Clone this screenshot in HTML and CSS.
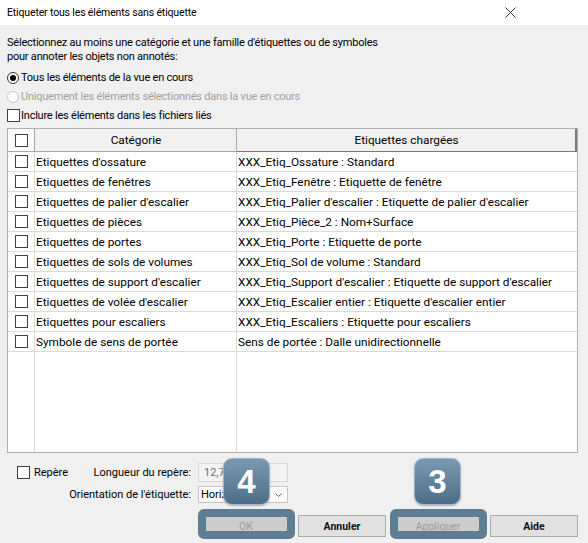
FILE: index.html
```html
<!DOCTYPE html>
<html lang="fr">
<head>
<meta charset="utf-8">
<title>Etiqueter tous les éléments sans étiquette</title>
<link rel="stylesheet" href="styles.css">
</head>
<body>
<div class="dialog">
  <div class="titlebar">
    <span class="title">Etiqueter tous les éléments sans étiquette</span>
    <svg class="close" viewBox="0 0 11 11"><path d="M0.5 0.5L10.5 10.5M10.5 0.5L0.5 10.5" stroke="#333" stroke-width="1" fill="none"/></svg>
  </div>
  <div class="content">
    <p class="intro">Sélectionnez au moins une catégorie et une famille d'étiquettes ou de symboles<br>pour annoter les objets non annotés:</p>
    <div class="opt first"><span class="radio checked"></span>Tous les éléments de la vue en cours</div>
    <div class="opt disabled"><span class="radio"></span>Uniquement les éléments sélectionnés dans la vue en cours</div>
    <div class="opt chk"><span class="check"></span>Inclure les éléments dans les fichiers liés</div>

    <div class="grid">
      <div class="row head">
        <div class="cb"><span class="check"></span></div>
        <div>Catégorie</div>
        <div class="sel">Etiquettes chargées</div>
      </div>
      <div class="row"><div class="cb"><span class="check"></span></div><div>Etiquettes d'ossature</div><div>XXX_Etiq_Ossature : Standard</div></div>
      <div class="row"><div class="cb"><span class="check"></span></div><div>Etiquettes de fenêtres</div><div>XXX_Etiq_Fenêtre : Etiquette de fenêtre</div></div>
      <div class="row"><div class="cb"><span class="check"></span></div><div>Etiquettes de palier d'escalier</div><div>XXX_Etiq_Palier d'escalier : Etiquette de palier d'escalier</div></div>
      <div class="row"><div class="cb"><span class="check"></span></div><div>Etiquettes de pièces</div><div>XXX_Etiq_Pièce_2 : Nom+Surface</div></div>
      <div class="row"><div class="cb"><span class="check"></span></div><div>Etiquettes de portes</div><div>XXX_Etiq_Porte : Etiquette de porte</div></div>
      <div class="row"><div class="cb"><span class="check"></span></div><div>Etiquettes de sols de volumes</div><div>XXX_Etiq_Sol de volume : Standard</div></div>
      <div class="row"><div class="cb"><span class="check"></span></div><div>Etiquettes de support d'escalier</div><div>XXX_Etiq_Support d'escalier : Etiquette de support d'escalier</div></div>
      <div class="row"><div class="cb"><span class="check"></span></div><div>Etiquettes de volée d'escalier</div><div>XXX_Etiq_Escalier entier : Etiquette d'escalier entier</div></div>
      <div class="row"><div class="cb"><span class="check"></span></div><div>Etiquettes pour escaliers</div><div>XXX_Etiq_Escaliers : Etiquette pour escaliers</div></div>
      <div class="row"><div class="cb"><span class="check"></span></div><div>Symbole de sens de portée</div><div>Sens de portée : Dalle unidirectionnelle</div></div>
      <div class="row filler"><div></div><div></div><div></div></div>
    </div>

    <div class="options">
      <div class="lab first"><span class="repere"><span class="check"></span>Repère</span><span>Longueur du repère:</span></div>
      <div class="field">12,7</div>
      <div class="lab">Orientation de l'étiquette:</div>
      <div class="combo"><span>Horizontal</span><svg class="chev" viewBox="0 0 7 4"><path d="M0.5 0.5L3.5 3.5L6.5 0.5" stroke="#666" fill="none"/></svg></div>
    </div>

    <div class="buttons">
      <div class="btn disabled">OK</div>
      <div class="btn">Annuler</div>
      <div class="btn disabled">Appliquer</div>
      <div class="btn">Aide</div>
    </div>
  </div>

  <div class="frame f-ok"></div>
  <div class="frame f-apply"></div>
  <div class="badge b4">4</div>
  <div class="badge b3">3</div>
</div>
</body>
</html>
```
FILE: styles.css
```css
html, body {
  margin: 0;
  padding: 0;
  background: #f0f0f0;
}
body {
  font-family: Roboto, "Liberation Sans", sans-serif;
  color: #000;
}
.dialog {
  position: relative;
  width: 588px;
  height: 543px;
  overflow: hidden;
}
.titlebar {
  height: 25px;
  background: #fff;
  display: flex;
  align-items: center;
  justify-content: space-between;
  padding-left: 7px;
}
.title {
  font-size: 10.5px;
  letter-spacing: -0.15px;
}
.close {
  width: 11px;
  height: 11px;
  margin-right: 72px;
}
.content {
  padding: 11px 10px 0 7px;
}
.intro {
  margin: 0;
  font-size: 11px;
  letter-spacing: -0.22px;
  line-height: 14px;
}
.opt {
  display: flex;
  align-items: center;
  height: 19px;
  font-size: 11px;
  letter-spacing: -0.22px;
  gap: 2px;
  white-space: nowrap;
}
.opt.first {
  margin-top: 4px;
}
.opt.chk {
  gap: 1px;
}
.radio {
  flex: none;
  width: 10px;
  height: 10px;
  border: 1px solid #333;
  border-radius: 50%;
  background: #fff;
  display: flex;
  align-items: center;
  justify-content: center;
}
.radio.checked::after {
  content: "";
  width: 6px;
  height: 6px;
  border-radius: 50%;
  background: #000;
}
.opt.disabled {
  color: #a0a0a0;
}
.opt.disabled .radio {
  border-color: #c8c8c8;
}
.check {
  flex: none;
  display: block;
  width: 11px;
  height: 11px;
  border: 1px solid #404040;
  background: #fff;
}

/* grid */
.grid {
  margin-top: 3px;
  height: 325px;
  box-sizing: border-box;
  border: 1px solid #b0b0b0;
  background: #fff;
  display: flex;
  flex-direction: column;
  font-size: 11.8px;
}
.row {
  flex: none;
  display: grid;
  grid-template-columns: 27px 202px 1fr;
  height: 20px;
}
.row > div {
  border-right: 1px solid #dadada;
  border-bottom: 1px solid #dadada;
  display: flex;
  align-items: center;
  padding-left: 1px;
  white-space: nowrap;
  overflow: hidden;
}
.row > div:last-child {
  border-right: none;
}
.row > .cb {
  padding: 0;
  justify-content: center;
}
.row.head {
  height: 23px;
}
.row.head > div {
  background: #f0f0f0;
  border-bottom-color: #a8a8a8;
  border-right-color: #a8a8a8;
  justify-content: center;
}
.row.head > .cb {
  background: #fbfbfb;
}
.row.head > .sel {
  border-right: 2px solid #7a7a7a;
  border-bottom: 1px solid #7a7a7a;
}
.row.filler {
  flex: 1;
}
.row.filler > div {
  border-bottom: none;
}

/* options */
.options {
  display: grid;
  grid-template-columns: 174px 90px;
  grid-template-rows: 19px 17px;
  column-gap: 7px;
  row-gap: 4px;
  margin-top: 10px;
  padding-left: 10px;
  font-size: 11px;
}
.lab {
  display: flex;
  align-items: center;
  justify-content: flex-end;
  white-space: nowrap;
}
.lab.first {
  justify-content: space-between;
}
.repere {
  display: flex;
  align-items: center;
  gap: 4px;
}
.field {
  box-sizing: border-box;
  border: 1px solid #d9d9d9;
  background: #f3f3f3;
  color: #6d6d6d;
  display: flex;
  align-items: center;
  padding-left: 5px;
}
.combo {
  box-sizing: border-box;
  border: 1px solid #c4c4c4;
  background: #fcfcfc;
  display: flex;
  align-items: center;
  justify-content: space-between;
  padding: 0 5px 0 2px;
  white-space: nowrap;
}
.chev {
  width: 7px;
  height: 4px;
}

/* buttons */
.buttons {
  display: flex;
  justify-content: flex-end;
  gap: 8px;
  margin-top: 12px;
}
.btn {
  width: 88px;
  height: 22px;
  box-sizing: border-box;
  border: 1px solid #adadad;
  background: #e1e1e1;
  font-size: 10.5px;
  font-weight: 700;
  color: #111;
  display: flex;
  align-items: center;
  justify-content: center;
}
.btn.disabled {
  background: #cccccc;
  border-color: #bfbfbf;
  color: #9c9c9c;
  font-weight: 400;
}

/* overlays */
.frame {
  position: absolute;
  top: 509px;
  width: 97px;
  height: 30px;
  box-sizing: border-box;
  border: 8px solid #5f7d92;
  border-radius: 6px;
}
.f-ok { left: 198px; }
.f-apply { left: 390px; }
.badge {
  position: absolute;
  top: 458px;
  width: 47px;
  height: 47px;
  box-sizing: border-box;
  border-radius: 9px;
  border: 1px solid #9fb4c6;
  background: linear-gradient(#7a99b2, #4d6c85);
  box-shadow: 0 1px 2px rgba(0, 0, 0, 0.25);
  color: #fff;
  font: bold 33px "Liberation Sans", Arial, sans-serif;
  display: flex;
  align-items: center;
  justify-content: center;
}
.b4 { left: 223px; }
.b3 { left: 414px; }
```
